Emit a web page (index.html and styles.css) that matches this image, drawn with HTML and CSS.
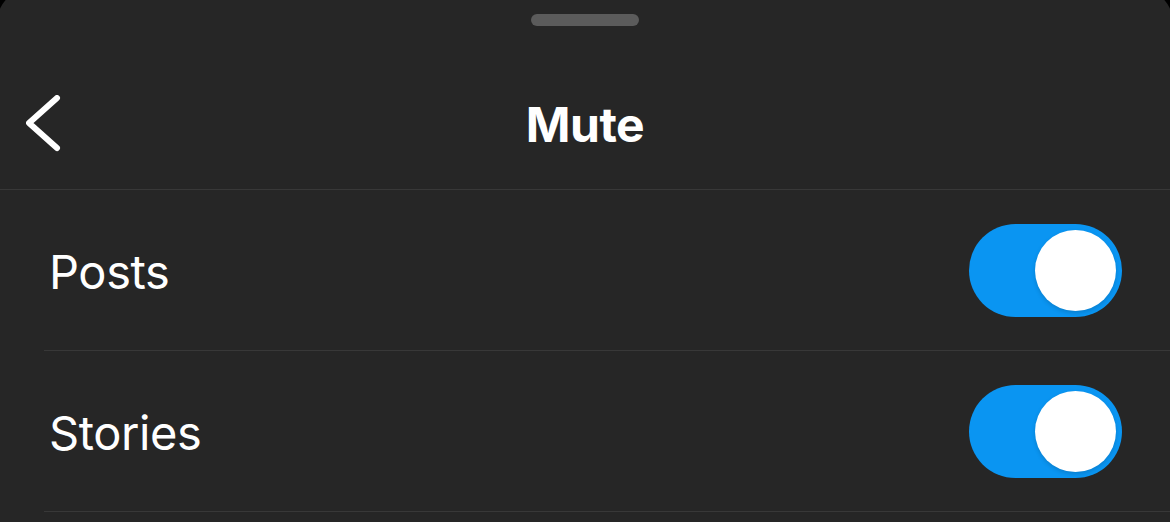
FILE: index.html
```html
<!DOCTYPE html>
<html lang="en">
<head>
  <meta charset="UTF-8">
  <meta name="viewport" content="width=device-width, initial-scale=1.0">
  <title>Mute</title>
  <link rel="stylesheet" href="styles.css">
</head>
<body>
  <div class="sheet">
    <div class="handle"></div>

    <div class="header">
      <button class="back" aria-label="Back">
        <svg width="40" height="60" viewBox="0 0 40 60">
          <polyline points="31,3 3,28 31,53" fill="none" stroke="#fff" stroke-width="6" stroke-linecap="round" stroke-linejoin="round"/>
        </svg>
      </button>
      <h1 class="title">Mute</h1>
    </div>

    <div class="options">
      <div class="option">
        <span class="label">Posts</span>
        <div class="switch on"><div class="knob"></div></div>
      </div>
      <div class="option">
        <span class="label">Stories</span>
        <div class="switch on"><div class="knob"></div></div>
      </div>
    </div>
  </div>
</body>
</html>
```

FILE: styles.css
```css
body {
  margin: 0;
  padding: 0;
  background: #000;
  font-family: Inter, 'Noto Sans', sans-serif;
  color: #fff;
  overflow: hidden;
}

.sheet {
  margin: -14px -4px 0 -4px;
  padding: 28px 4px 0 4px;
  background: #262626;
  border-radius: 40px 40px 0 0;
  height: calc(100vh + 14px);
  box-sizing: border-box;
}

.handle {
  width: 108px;
  height: 12px;
  margin: 0 auto;
  background: #5b5b5b;
  border-radius: 6px;
}

.header {
  display: flex;
  align-items: center;
  justify-content: center;
  height: 130px;
  margin-top: 33px;
  border-bottom: 1px solid #383838;
  position: relative;
}

.back {
  position: absolute;
  left: 26px;
  top: 36px;
  padding: 0;
  border: none;
  background: none;
  display: flex;
}

.title {
  margin: 0;
  font-size: 48px;
  font-weight: 700;
  letter-spacing: -0.5px;
}

.options {
  padding-left: 44px;
}

.option {
  display: flex;
  align-items: center;
  justify-content: space-between;
  height: 160px;
  border-bottom: 1px solid #383838;
  padding-left: 5px;
  padding-right: 48px;
}

.label {
  font-size: 47px;
  font-weight: 400;
  letter-spacing: -0.4px;
  padding-top: 2px;
}

.switch {
  width: 153px;
  height: 93px;
  border-radius: 47px;
  background: #3a3a3c;
  display: flex;
  align-items: center;
  padding: 0 6px;
  box-sizing: border-box;
}

.switch.on {
  background: #0a95f2;
  justify-content: flex-end;
}

.knob {
  width: 81px;
  height: 81px;
  border-radius: 50%;
  background: #fff;
  box-shadow: 0 2px 4px rgba(0, 0, 0, 0.15);
}
```
